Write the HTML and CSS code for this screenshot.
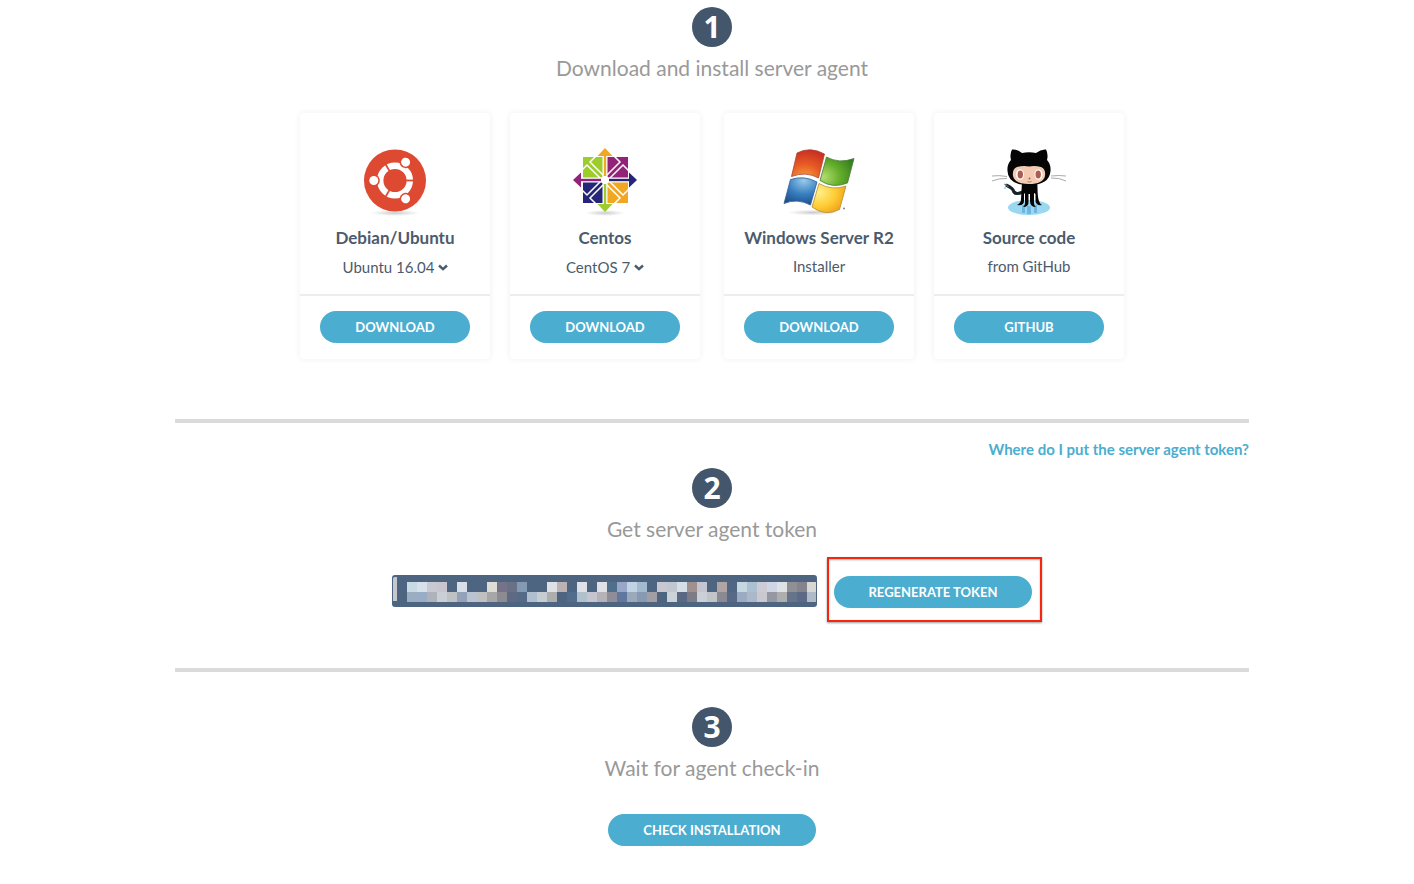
FILE: index.html
```html
<!DOCTYPE html>
<html lang="en">
<head>
<meta charset="utf-8">
<meta name="viewport" content="width=device-width, initial-scale=1">
<title>Install server agent</title>
<link rel="stylesheet" href="styles.css">
</head>
<body>
<main class="setup">
  <section class="step">
    <span class="step-number">1</span>
    <h2 class="step-title">Download and install server agent</h2>
    <div class="platforms">
      <div class="platform-pair">
        <article class="card">
          <div class="card-info">
            <svg class="logo" viewBox="0 0 80 80" aria-hidden="true">
              <defs><radialGradient id="shade"><stop offset="0" stop-color="#888" stop-opacity=".45"/><stop offset="1" stop-color="#999" stop-opacity="0"/></radialGradient></defs>
              <ellipse cx="40" cy="73" rx="25" ry="3" fill="url(#shade)"/>
              <circle cx="40" cy="40.500" r="31" fill="#dd4a31"/>
              <circle cx="40" cy="40.500" r="14.800" fill="none" stroke="#fff" stroke-width="6.400"/>
              <g id="arm"><path d="M50 40.500H60" stroke="#dd4a31" stroke-width="1.800"/><circle cx="18.800" cy="40.500" r="6" fill="#dd4a31"/><circle cx="18.800" cy="40.500" r="4.500" fill="#fff"/></g>
              <use href="#arm" transform="rotate(120 40 40.500)"/>
              <use href="#arm" transform="rotate(240 40 40.500)"/>
            </svg>
            <h3 class="card-title">Debian/Ubuntu</h3>
            <div class="picker">
              <select class="picker-select" aria-label="Ubuntu version"><option>Ubuntu 16.04</option></select>
              <svg class="chevron" viewBox="0 0 10 7" aria-hidden="true"><path d="M1 1.500 5 5.200 9 1.500"/></svg>
            </div>
          </div>
          <div class="card-action"><button class="btn" type="button">DOWNLOAD</button></div>
        </article>
        <article class="card">
          <div class="card-info">
            <svg class="logo" viewBox="0 0 80 80" aria-hidden="true">
              <ellipse cx="40" cy="73" rx="20" ry="3" fill="url(#shade)"/>
              <path d="M18 17h21v22H18z" fill="#9ccd2a"/>
              <path d="M41 17h22v22H41z" fill="#932279"/>
              <path d="M18 41h21v22H18z" fill="#262577"/>
              <path d="M41 41h22v22H41z" fill="#efa724"/>
              <path d="M40 16v48M17 40h46" stroke="#fff" stroke-width="5"/>
              <path d="M32 15 25 22 40 37 55 22 48 15M15 32 22 25 37 40 22 55 15 48M32 65 25 58 40 43 55 58 48 65M65 32 58 25 43 40 58 55 65 48" fill="none" stroke="#fff" stroke-width="1.500"/>
              <g fill="none" stroke-width="2.400">
                <path d="M40 14v22" stroke="#efa724"/><path d="M44 40h22" stroke="#262577"/><path d="M40 44v22" stroke="#9ccd2a"/><path d="M14 40h22" stroke="#932279"/>
              </g>
              <path d="m40 8 7.500 8h-15z" fill="#efa724"/><path d="m72 40-8 7.500v-15z" fill="#262577"/>
              <path d="m40 72 7.500-8h-15z" fill="#9ccd2a"/><path d="m8 40 8 7.500v-15z" fill="#932279"/>
              <circle cx="40" cy="40" r="4" fill="#fff"/>
            </svg>
            <h3 class="card-title">Centos</h3>
            <div class="picker">
              <select class="picker-select" aria-label="CentOS version"><option>CentOS 7</option></select>
              <svg class="chevron" viewBox="0 0 10 7" aria-hidden="true"><path d="M1 1.500 5 5.200 9 1.500"/></svg>
            </div>
          </div>
          <div class="card-action"><button class="btn" type="button">DOWNLOAD</button></div>
        </article>
      </div>
      <div class="platform-pair">
        <article class="card">
          <div class="card-info">
            <svg class="logo" viewBox="0 0 80 80" aria-hidden="true">
              <defs>
                <radialGradient id="red" cx=".4" cy="1" r="1"><stop offset="0" stop-color="#f9a13b"/><stop offset=".5" stop-color="#e65a24"/><stop offset="1" stop-color="#c92f23"/></radialGradient>
                <radialGradient id="green" cx=".1" cy=".7" r="1"><stop offset="0" stop-color="#b3dc70"/><stop offset=".5" stop-color="#64ae2b"/><stop offset="1" stop-color="#327d1d"/></radialGradient>
                <radialGradient id="blue" cx=".6" cy=".1" r="1"><stop offset="0" stop-color="#98cbea"/><stop offset=".5" stop-color="#397fc0"/><stop offset="1" stop-color="#174783"/></radialGradient>
                <radialGradient id="gold" cx=".2" cy=".3" r="1"><stop offset="0" stop-color="#fff18a"/><stop offset=".5" stop-color="#fecb32"/><stop offset="1" stop-color="#e88d13"/></radialGradient>
              </defs>
              <ellipse cx="34" cy="72.500" rx="26" ry="3" fill="url(#shade)"/>
              <g stroke-width=".8">
                <path d="M18 13Q31 6 45.500 14L39.500 38Q27 31 12.500 36.500Z" fill="url(#red)" stroke="#a74436"/>
                <path d="M47.500 17Q60 24 75 18.500L68.500 43Q54 49 41 40.500Z" fill="url(#green)" stroke="#477b36"/>
                <path d="M11.500 39.500Q25 35 38 42L31.500 65Q18 58 5 63.500Z" fill="url(#blue)" stroke="#305d91"/>
                <path d="M40 43.500Q53 51 67 46L60.500 69.500Q46 77 33 67Z" fill="url(#gold)" stroke="#b58b30"/>
              </g>
              <circle cx="65" cy="68.500" r=".9" fill="#777"/>
            </svg>
            <h3 class="card-title">Windows Server R2</h3>
            <p class="card-text">Installer</p>
          </div>
          <div class="card-action"><button class="btn" type="button">DOWNLOAD</button></div>
        </article>
        <article class="card">
          <div class="card-info">
            <svg class="logo" viewBox="0 0 80 80" aria-hidden="true">
              <ellipse cx="40" cy="67.500" rx="21" ry="7.500" fill="#9ad7f0"/>
              <path d="M33 65h3v8h-3zM38 66h4v8h-4zM45 65h3v8h-3z" fill="#6eb5df"/>
              <path d="M17 45Q24 48 25 52Q27 55 34 52" fill="none" stroke="#172326" stroke-width="3.200"/>
              <path d="m15.500 44 4 3" stroke="#53666b" stroke-width="1.200"/>
              <path d="M16 47v2" stroke="#74c5e8"/>
              <path d="M33 42H48C49 47 48 55 50 61Q51 64 53 65Q47 66 46.500 61V54L45 53V62Q45 66 47 67Q41 67 41 61V54H39.500V61Q40 67 34 67Q36.500 65 36 61V53L35 54V61Q35 66 28 65Q32 63 32 59Z" fill="#050505"/>
              <path d="M23 9.500Q28 9 33 13Q40 11.500 47 13Q52 9 57 9.500Q59.500 14 58 20Q62 24 61.500 31Q60.500 45 40 45Q19 45 18.500 31Q18 24 22 20Q20.500 14 23 9.500Z" fill="#050505"/>
              <path d="M28 27Q34 25.500 40 26.500Q46 25.500 52 27Q57 29 56 36Q54 44 40 44Q26 44 24 36Q23 29 28 27Z" fill="#f2cbb2"/>
              <ellipse cx="31" cy="34.500" rx="4" ry="5.300" fill="#fff"/><ellipse cx="49.500" cy="34.500" rx="4" ry="5.300" fill="#fff"/>
              <ellipse cx="31.300" cy="34.500" rx="2.700" ry="3.900" fill="#ad5c51"/><ellipse cx="49.200" cy="34.500" rx="2.700" ry="3.900" fill="#ad5c51"/>
              <circle cx="40.500" cy="38.500" r="1" fill="#ad5c51"/><path d="M38.500 41.500q2 1.200 4 0" fill="none" stroke="#ad5c51" stroke-width=".8"/>
              <path d="M18 36.500Q10 35 3 36M18 38.500Q10 38 3 41M62 36Q70 35 77 36M62 38Q70 37.500 77 41" fill="none" stroke="#aaa" stroke-width="1"/>
            </svg>
            <h3 class="card-title">Source code</h3>
            <p class="card-text">from GitHub</p>
          </div>
          <div class="card-action"><button class="btn" type="button">GITHUB</button></div>
        </article>
      </div>
    </div>
  </section>

  <section class="step step-token">
    <a class="help-link" href="#token">Where do I put the server agent token?</a>
    <span class="step-number">2</span>
    <h2 class="step-title">Get server agent token</h2>
    <div class="token-row">
      <svg class="token" id="token" viewBox="0 0 425 32" role="img" aria-label="Hidden server agent token">
        <path d="M1 4q0-2 2-2h2v24H1z" fill="#c5c9ce"/>
      </svg>
      <div class="highlight"><button class="btn btn-regenerate" type="button">REGENERATE TOKEN</button></div>
    </div>
  </section>

  <section class="step step-check">
    <span class="step-number">3</span>
    <h2 class="step-title">Wait for agent check-in</h2>
    <button class="btn btn-check" type="button">CHECK INSTALLATION</button>
  </section>
</main>
<script src="token.js"></script>
</body>
</html>
```

FILE: styles.css
```css
* {
  box-sizing: border-box;
}

body {
  margin: 0;
  background: #fff;
  color: #4c5b6b;
  font-family: Lato, "Liberation Sans", sans-serif;
}

h2,
h3,
p {
  margin: 0;
}

.setup {
  padding: 7px 165px 38px 175px;
}

.step {
  display: flex;
  flex-direction: column;
  align-items: center;
}

.step-number {
  width: 40px;
  height: 40px;
  border-radius: 50%;
  background: #43566c;
  color: #fff;
  font-family: "Noto Sans", sans-serif;
  font-size: 30px;
  font-weight: 700;
  line-height: 40px;
  text-align: center;
}

.step-title {
  margin-top: 7px;
  color: #999;
  font-size: 21px;
  font-weight: 400;
  line-height: 28px;
}

.platforms {
  display: flex;
  flex-wrap: wrap;
  justify-content: center;
  gap: 24px;
  margin: 31px 0 60px;
}

.platform-pair {
  display: flex;
  gap: 20px;
}

.card {
  width: 190px;
  border-radius: 4px;
  box-shadow: 0 0 6px rgba(0, 0, 0, 0.07);
}

.card-info {
  display: flex;
  flex-direction: column;
  align-items: center;
  height: 183px;
  padding-top: 27px;
  border-bottom: 2px solid #ededf1;
}

.logo {
  width: 80px;
  height: 80px;
}

.card-title {
  margin-top: 6px;
  font-size: 17px;
  font-weight: 700;
  line-height: 24px;
}

.card-text,
.picker {
  margin-top: 6px;
  font-size: 15px;
  line-height: 20px;
}

.picker {
  position: relative;
}

.picker-select {
  display: block;
  height: 22px;
  padding: 0 13px 0 0;
  border: 0;
  background: transparent;
  color: inherit;
  font: inherit;
  appearance: none;
  cursor: pointer;
}

.chevron {
  position: absolute;
  top: 8px;
  right: 0;
  width: 10px;
  height: 7px;
  fill: none;
  stroke: #4c5b6b;
  stroke-width: 2.4;
  pointer-events: none;
}

.card-action {
  padding: 15px 20px 16px;
}

.btn {
  display: block;
  width: 100%;
  height: 32px;
  padding: 0;
  border: 0;
  border-radius: 16px;
  background: #4badcf;
  color: #fff;
  font-family: inherit;
  font-size: 13px;
  font-weight: 700;
  line-height: 32px;
  cursor: pointer;
}

.step-token,
.step-check {
  border-top: 4px solid #dbdbdb;
}

.step-token {
  padding: 16px 0 60px;
}

.help-link {
  align-self: flex-end;
  margin-bottom: 9px;
  color: #4badcf;
  font-size: 15px;
  font-weight: 700;
  line-height: 20px;
  text-decoration: none;
}

.token-row {
  display: flex;
  flex-wrap: wrap;
  justify-content: center;
  gap: 17px;
  margin-top: 32px;
}

.token {
  width: 425px;
  height: 32px;
  border-radius: 3px;
  background: #4d6581;
}

.highlight {
  position: relative;
  padding-top: 1px;
}

.highlight::after {
  position: absolute;
  inset: -18px -10px -14px -7px;
  border: 2px solid #f4260d;
  box-shadow: 0 1px 2px rgba(0, 0, 0, 0.4), inset 0 1px 2px rgba(0, 0, 0, 0.3);
  content: "";
  pointer-events: none;
}

.btn-regenerate {
  width: 198px;
}

.step-check {
  padding-top: 35px;
}

.btn-check {
  width: 208px;
  margin-top: 32px;
}
```

FILE: token.js
```js
const rows = [
  "c8dbe5 d8e0e9 c8c9d3 c8c5cf 4d6581 d8dfe8 4d6581 4d6581 dfdbd5 75728a 687185 8499b3 4d6581 4d6581 dfe1e5 bcb1b3 4d6581 dfe1e7 4d6581 dfe1e6 506f8d 98a7c7 bfd3e5 a4bacf 4d6581 c9c7d2 c2c7cf d6dfe8 a0908f c3c6d1 4d6581 b0a5a4 506684 c5d7df acc0d2 cdccd6 cfd5e2 dfe2e5 908f93 85838d d7d8d4",
  "9badc0 9aadc8 aeb2bb c9cfd5 bfc2c4 94a2b9 b9c3d1 c0c0c2 a7a7a7 8c8b92 5e6983 556a87 afbfcf c5cdd1 aeaeae 4d6581 526d8c b1c1cb c4c5ce b5b3b7 8e8d98 6077a0 9baabb 889ab2 a39ea4 4d6581 cbd2d8 5a6883 7d7b86 cacfd8 c3c4c7 8b8a92 566986 9aabc2 aab8ca cac9d0 9597a2 aeaeaf 667389 5d6a85 b0bbc8"
];
const token = document.getElementById("token");
rows.forEach((row, r) => {
  row.split(" ").forEach((color, c) => {
    const cell = document.createElementNS("http://www.w3.org/2000/svg", "rect");
    cell.setAttribute("x", 15 + c * 10);
    cell.setAttribute("y", 7 + r * 10);
    cell.setAttribute("width", c === 40 ? 9 : 10);
    cell.setAttribute("height", 10);
    cell.setAttribute("fill", "#" + color);
    token.appendChild(cell);
  });
});
```
